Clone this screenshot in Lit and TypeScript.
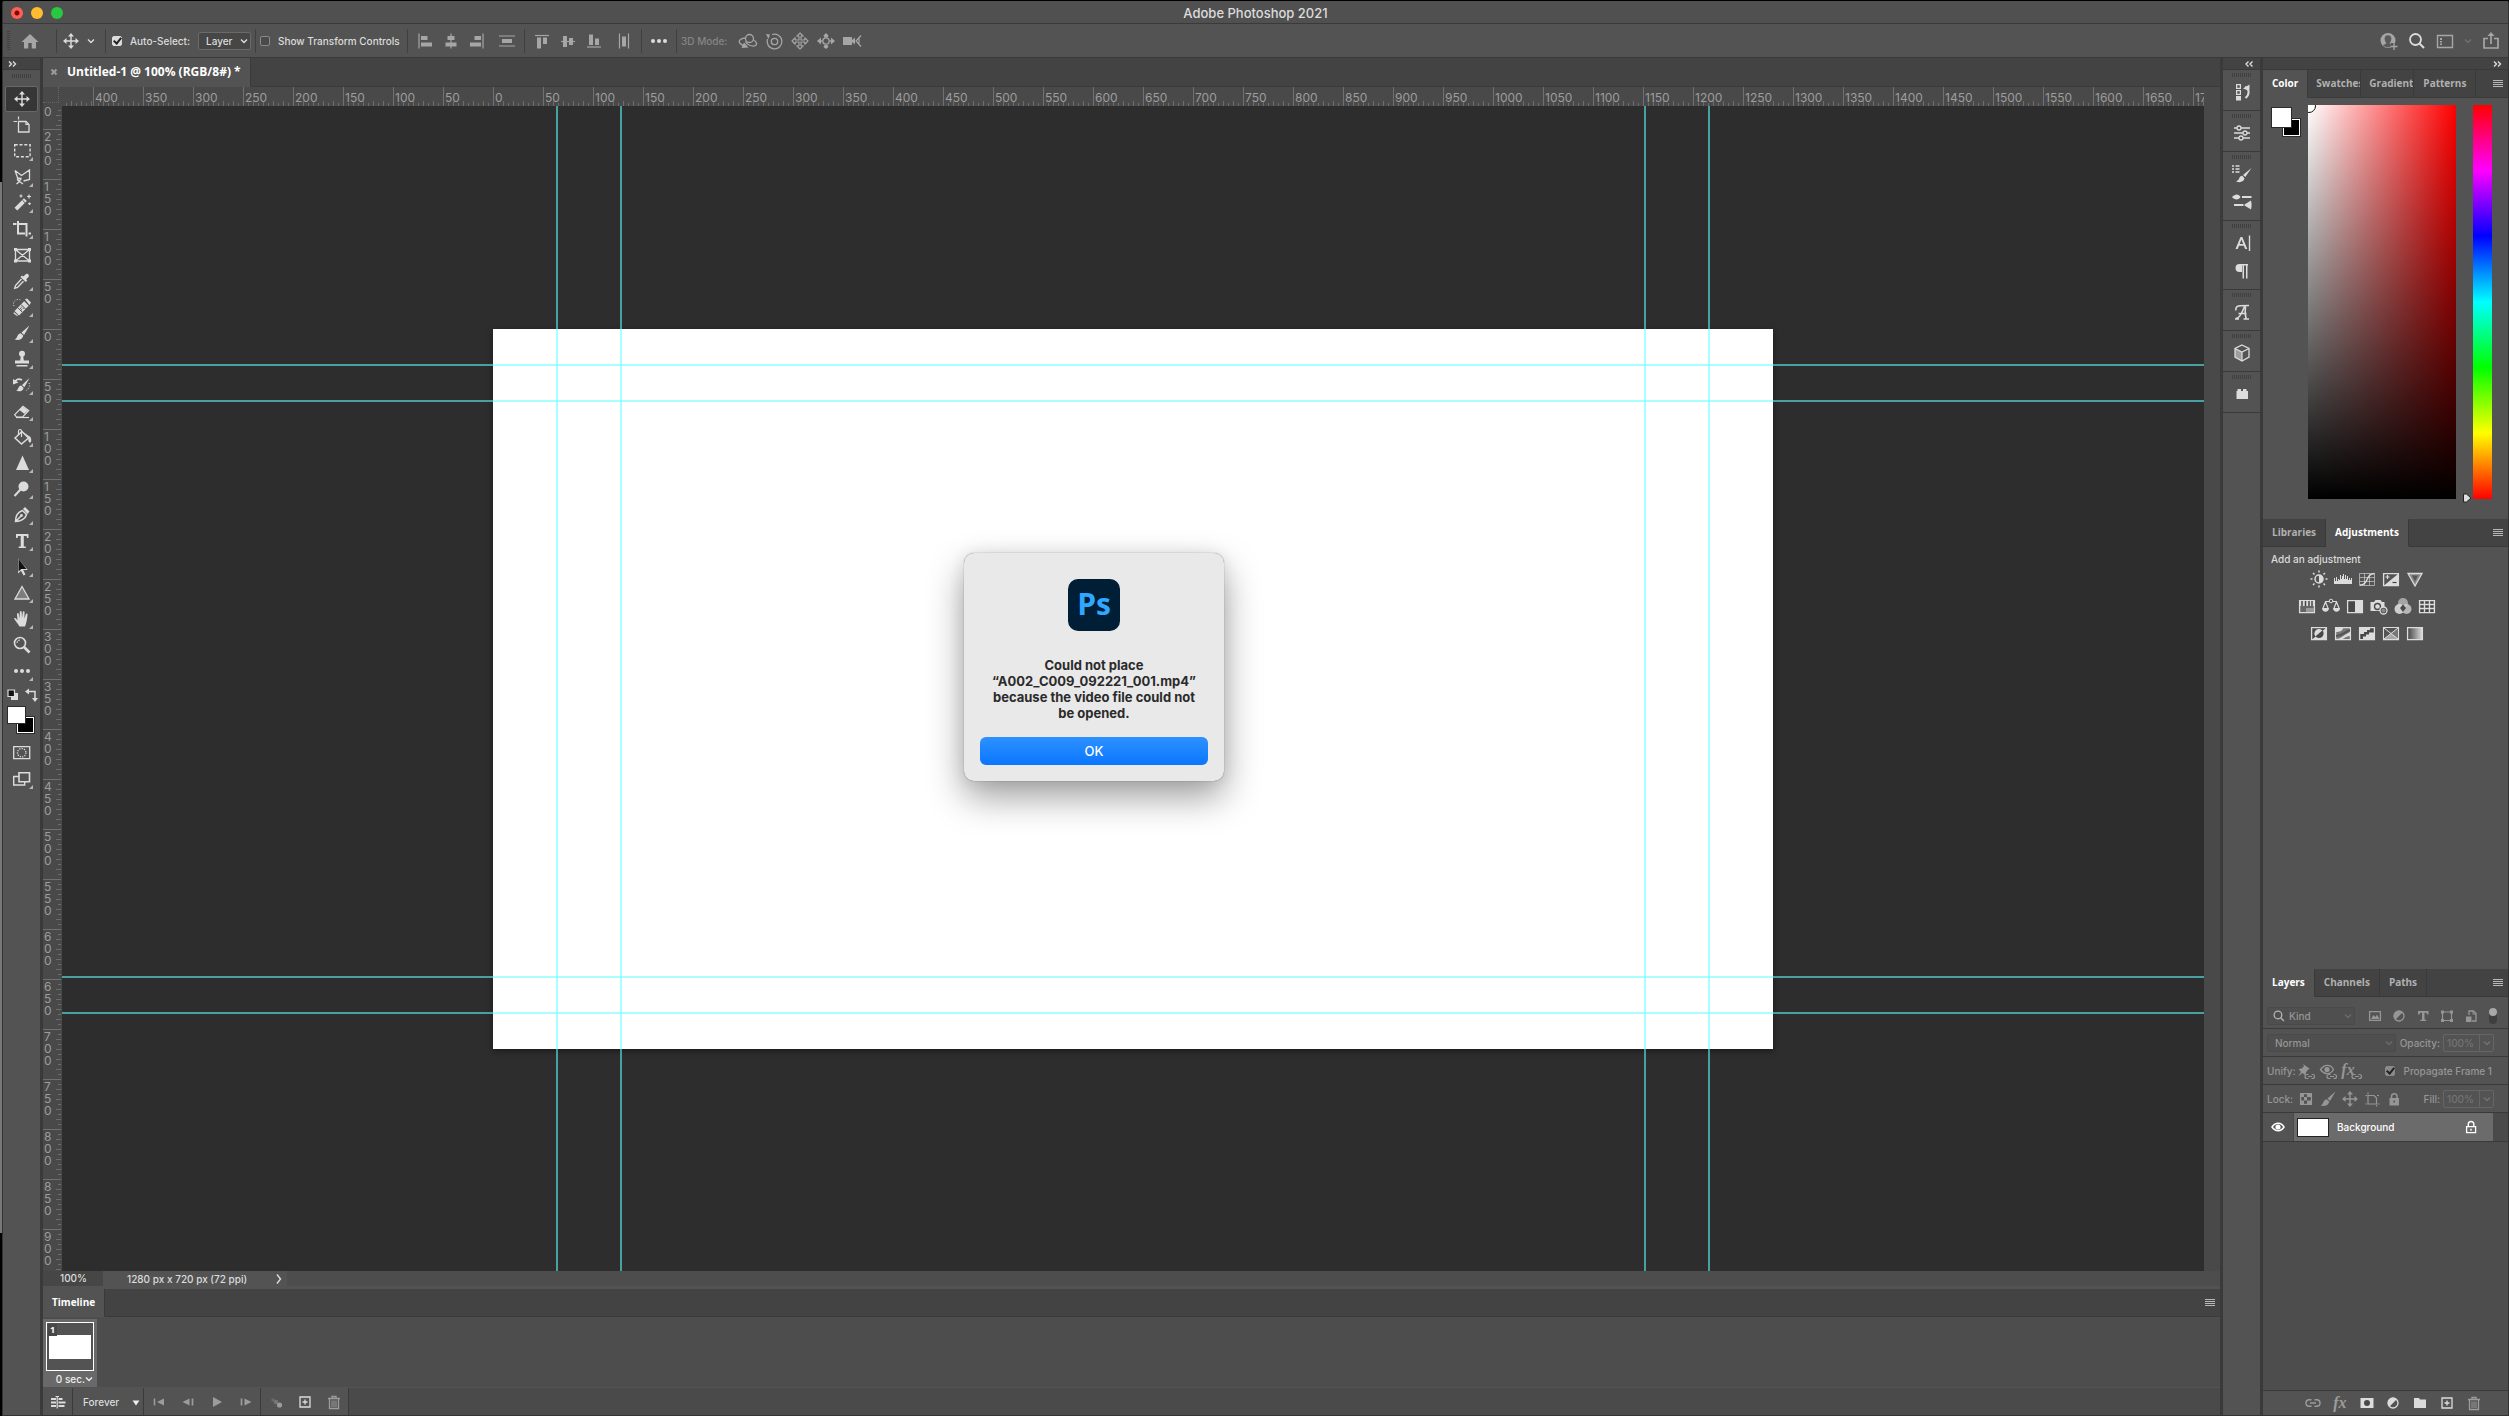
import { LitElement, html, svg, css, TemplateResult } from "lit";
import { customElement, state } from "lit/decorators.js";
import { classMap } from "lit/directives/class-map.js";

const brush = svg`<path d="M17.500 2.500 9.500 9.500 12 12Z M8.800 10.200 C6.500 10.400 5.800 12 5 14 4.600 15.200 3.500 16 2.500 16.300 6 18 10.500 16.500 11.300 12.700Z" fill="currentColor"/>`;
const moveCross = svg`<path d="M10 4v12M4 10h12" stroke="currentColor" stroke-width="1.400"/><path d="M10 2l3 3.500H7zM10 18l3-3.500H7zM2 10l3.500-3v6zM18 10l-3.500-3v6z" fill="currentColor"/>`;
const smallLink = svg`<path d="M12.500 13.500h-1.500a2 2 0 0 0 0 4h1.500M15.500 13.500h1a2 2 0 0 1 0 4h-1M12 15.500h4" stroke="currentColor" fill="none" stroke-width="1.200"/>`;
const trash = svg`<path d="M4 6.500h12M8 6V4.500h4V6" fill="none" stroke="currentColor" stroke-width="1.300"/><path d="M5.500 7v9.500h9V7" fill="none" stroke="currentColor" stroke-width="1.300"/><path d="M8 8.500v6.500M10 8.500v6.500M12 8.500v6.500" stroke="currentColor"/>`;

const ICONS: Record<string, TemplateResult> = {
  home: svg`<path d="M10 3 1.500 11H4v6.500h4.300V12h3.400v5.500H16V11h2.500z" fill="currentColor"/>`,
  move: moveCross,
  chevron: svg`<path d="M7 8.500l3 3 3-3" fill="none" stroke="currentColor" stroke-width="1.400"/>`,
  chevronRight: svg`<path d="M8 5.500l3.500 4.500L8 14.500" fill="none" stroke="currentColor" stroke-width="1.400"/>`,
  left: svg`<path d="M4 2.500v15" stroke="currentColor" stroke-width="1.200"/><path d="M6 5h6.500v4H6zM6 11.500h11v4H6z" fill="currentColor"/>`,
  hcenter: svg`<path d="M10 2.500v15" stroke="currentColor" stroke-width="1.200"/><path d="M6.500 5h7v4h-7zM4.500 11.500h11v4h-11z" fill="currentColor"/>`,
  right: svg`<path d="M16 2.500v15" stroke="currentColor" stroke-width="1.200"/><path d="M7.500 5H14v4H7.500zM3 11.500h11v4H3z" fill="currentColor"/>`,
  distv: svg`<path d="M2 5h16M2 15h16" stroke="currentColor" stroke-width="1.200"/><path d="M5 8h10v4H5z" fill="currentColor"/>`,
  top: svg`<path d="M3 4.500h14" stroke="currentColor" stroke-width="1.200"/><path d="M5 6.500h4v11H5zM11 6.500h4v6.500h-4z" fill="currentColor"/>`,
  vcenter: svg`<path d="M3 10.500h14" stroke="currentColor" stroke-width="1.200"/><path d="M5 5h4v11H5zM11 7h4v7h-4z" fill="currentColor"/>`,
  bottom: svg`<path d="M3 16h14" stroke="currentColor" stroke-width="1.200"/><path d="M5 3.500h4V14H5zM11 7.500h4V14h-4z" fill="currentColor"/>`,
  disth: svg`<path d="M5.500 2.500v15M14.500 2.500v15" stroke="currentColor" stroke-width="1.200"/><path d="M8 5.500h4v10H8z" fill="currentColor"/>`,
  dots: svg`<circle cx="4" cy="10" r="2" fill="currentColor"/><circle cx="10" cy="10" r="2" fill="currentColor"/><circle cx="16" cy="10" r="2" fill="currentColor"/>`,
  orbit: svg`<circle cx="11.500" cy="7.500" r="4" fill="none" stroke="currentColor" stroke-width="1.300"/><path d="M7.500 7C3 7 .5 9.500 1.500 11.500c.5 1.500 2.500 2.500 5 3.500M15.500 9c3 1.500 4 4 2 5.500-1.500 1-4 .5-6.500-.5-1.500-.7-3-2-3.500-3.500" fill="none" stroke="currentColor" stroke-width="1.300"/><path d="M6 11.500l4.500 5-7 .5z" fill="currentColor"/>`,
  roll: svg`<circle cx="10.500" cy="10.500" r="3.200" fill="none" stroke="currentColor" stroke-width="1.300"/><path d="M8 3.500a7.400 7.400 0 1 1-4.500 4.500" fill="none" stroke="currentColor" stroke-width="1.300"/><path d="M2 3l4 .5L4.500 8z" fill="currentColor"/>`,
  pan3d: svg`<path d="M10 2l3 3-2 .5V9h3.500l.5-2 3 3-3 3-.5-2H11v3.500l2 .5-3 3-3-3 2-.5V11H5.500L5 13l-3-3 3-3 .5 2H9V5.500L7 5z" fill="none" stroke="currentColor" stroke-width="1.200"/>`,
  slide3d: svg`<circle cx="10" cy="10" r="3.200" fill="none" stroke="currentColor" stroke-width="1.300"/><path d="M10 2l2.500 2.500-1 2h-3l-1-2zM10 18l2.500-2-1-2h-3l-1 2zM1 10l4-3.500V9l2 1-2 1v2.500zM19 10l-4-3.500V9l-2 1 2 1v2.500z" fill="currentColor"/>`,
  camera3d: svg`<path d="M1 6h9v3l3-2.500v7L10 11v3H1z" fill="currentColor"/><path d="M19 4.500L14 10l5 5.500M17 7.500v5" fill="none" stroke="currentColor" stroke-width="1.200"/>`,
  user: svg`<circle cx="9" cy="9.500" r="7.500" fill="currentColor"/><path d="M9 4.300c-2.600 0-3.800 2-3.300 4.400.3 1.500.9 2.300 1.400 3 .2 1-.8 1.300-3.100 2.600 3 2.700 7 2.700 10 0-2.300-1.300-3.300-1.600-3.100-2.600.5-.7 1.100-1.500 1.400-3C12.800 6.300 11.600 4.300 9 4.300z" fill="#5a5a5a"/><path d="M12 12h7v7h-7z" fill="#535353"/><path d="M11.500 15.500h7M15 12v7" stroke="currentColor" stroke-width="1.300"/>`,
  search: svg`<circle cx="8.500" cy="8.500" r="5.500" fill="none" stroke="currentColor" stroke-width="1.800"/><path d="M12.500 12.500l4.500 4.500" stroke="currentColor" stroke-width="2"/>`,
  workspace: svg`<path d="M2.500 4.500h15v12h-15z" fill="none" stroke="currentColor" stroke-width="1.400"/><path d="M5 7h2v2H5zM5 10h2v1.500H5zM5 12.500h2V14H5z" fill="currentColor"/>`,
  share: svg`<path d="M7 7.500H3v9.500h14V7.500h-4M10 13V3" fill="none" stroke="currentColor" stroke-width="1.700"/><path d="M10 1l3.500 4h-7z" fill="currentColor"/>`,
  artboard: svg`<path d="M6.500 6.500h7.500l3 3v7.500H6.500z" fill="none" stroke="currentColor" stroke-width="1.300"/><path d="M14 6.500v3h3M6.500 1.500v3M1.500 6.500h3.500" fill="none" stroke="currentColor" stroke-width="1.200"/>`,
  marquee: svg`<path d="M2.700 3.700h15.400v12H2.700z" fill="none" stroke="currentColor" stroke-width="1.400" stroke-dasharray="3 1.800"/>`,
  lasso: svg`<path d="M3 3.500l6.500 5L17.500 3v9.500l-6 1.500M3 3.500L6 12l3.500-1M9 12c-1-1.500-4-1-3.500.7.5 1.500 3.500.8 3.500-.7zM7.500 14.500l-3 2.500M6 13.500l5 3.500" fill="none" stroke="currentColor" stroke-width="1.300"/>`,
  wand: svg`<path d="M2.500 14.700L12 5.200l2.800 2.800L5.300 17.500z" fill="currentColor"/><path d="M10.300 7l2.700 2.700" stroke="#535353"/><path d="M9 1.500v3M7.500 3h3M17 1.500v4M15 3.500h4M17.500 9.500v2.500M16.200 10.700h2.600" stroke="currentColor" stroke-width="1.200"/>`,
  crop: svg`<path d="M1 5h3.500M6 2v12.500h7" fill="none" stroke="currentColor" stroke-width="2"/><path d="M6 5h8.500v12.500M16.500 14.500h2.500" fill="none" stroke="currentColor" stroke-width="2"/>`,
  frame: svg`<path d="M3.500 4.500h14v11.500h-14zM3.500 4.500l14 11.500M17.500 4.500l-14 11.500" fill="none" stroke="currentColor" stroke-width="1.300"/><path d="M2 3h3v3H2zM16 3h3v3h-3zM2 14.500h3v3H2zM16 14.500h3v3h-3z" fill="currentColor"/>`,
  eyedropper: svg`<path d="M13.500 3.500c1.500-2 4.500.5 3 2.500l-2.300 2.300 1 1.200-1.500 1.500L8.500 6 10 4.500l1.300 1z" fill="currentColor"/><path d="M9.500 8l-6 6.500-.8 2.800 2.800-.8 6-6.300" fill="none" stroke="currentColor" stroke-width="1.400"/>`,
  heal: svg`<path d="M2.500 14l9.700-9.700 4.500 4.500L7 18.500z" fill="currentColor"/><path d="M13 2.500l2-1 4 4-1.500 2.500zM2 15l-.5 1.500 3.500 2.500 1-.5z" fill="currentColor"/><path d="M5.800 10.700l4.500 4.500M9 7.500l4.500 4.500" stroke="#535353"/><path d="M9.500 9.700v.8M8.300 11.300h.8M10.800 11.300h.8M9.500 12.300v1" stroke="#535353" stroke-width="1.300"/><path d="M2 9c-1.500-3 .5-6.500 4-6.500 2 0 3 .8 3.500 1.500" stroke="currentColor" fill="none" stroke-dasharray="1 1.600"/>`,
  brush,
  stamp: svg`<circle cx="10" cy="4.800" r="3" fill="currentColor"/><path d="M8.800 7h2.400l.6 4.500H17v3H3v-3h5.200zM4.500 16h11v1.500h-11z" fill="currentColor"/>`,
  historyBrush: svg`<path d="M17.500 3L10 10l2.300 2.300zM9.300 10.600c-2 .2-2.600 1.600-3.200 3-.4 1-1 1.600-2 2 3 1.600 7 .5 7.500-2.700z" fill="currentColor"/><path d="M3 6.500c1.500-2.500 4-3 7-1.500" stroke="currentColor" stroke-width="1.500" fill="none"/><path d="M1 9.500V4l5.500 3.500z" fill="currentColor"/><path d="M17 8c1.500 3-.5 7-4 8" stroke="currentColor" fill="none" stroke-dasharray="1 1.500"/>`,
  eraser: svg`<path d="M2.500 13.500L10.500 5.500l5.500 4-5.500 5H4z" fill="currentColor"/><path d="M7.500 9l5 4-2 2H4l-1.200-1.500z" fill="#535353"/><path d="M2.700 13.700L11 5.200l5.700 4.300-6 6.500H4.500z" fill="none" stroke="currentColor" stroke-width="1.200"/><path d="M4 16.500h13" stroke="currentColor" stroke-width="1.200"/>`,
  bucket: svg`<path d="M3 11l7-6.500 6.500 6.500-7 6z" fill="none" stroke="currentColor" stroke-width="1.500"/><path d="M6.500 8V4c0-2 3-2 3 0v6" fill="none" stroke="currentColor" stroke-width="1.200"/><path d="M11 5l7.500 5c1 2 1 5 0 5.500-2 .5-2.500-2.500-2-5z" fill="currentColor"/>`,
  sharpen: svg`<path d="M10.500 2.500l6.500 14.500H4z" fill="currentColor"/>`,
  dodge: svg`<circle cx="11.500" cy="7.500" r="5" fill="currentColor"/><path d="M8.500 10.500L2.500 17" stroke="currentColor" stroke-width="2"/>`,
  pen: svg`<path d="M3.500 16.500C3.500 11.500 6 7 10.500 5.500L14.500 9.500C13.500 14 8.500 16.500 3.500 16.500zM3.500 16.500l5.500-5.500" fill="none" stroke="currentColor" stroke-width="1.500"/><circle cx="9.500" cy="10.500" r="1.400" fill="currentColor"/><path d="M11 4l2-2 4.500 4.500-2 2.500z" fill="currentColor"/>`,
  type: svg`<path d="M4 3h12.500v4H15l-.5-2h-2.700v10.500h2V17H6.700v-1.500h2V5H6l-.5 2H4z" fill="currentColor"/>`,
  arrow: svg`<path d="M6 1.500v15l3-2.800 2.500 4.800 2-1-2.300-4.500h4.500z" fill="currentColor"/><path d="M6.500 2v12.500l2.700-2.600h5.200z" fill="#111"/>`,
  triangle: svg`<path d="M10 3.500l7 12.500H3z" fill="#7d7d7d" stroke="currentColor" stroke-width="1.300"/>`,
  hand: svg`<path d="M2 9.500c1-1 2-.3 3.500 2L5 5c.3-1.200 1.500-1.200 1.800 0l.7 4.500L7.800 3c.3-1.200 1.700-1.200 1.900 0l.3 6 .8-6c.3-1.200 1.700-1 1.800.2L12.300 9.500l1.500-4.300c.5-1.100 1.800-.7 1.700.5-.3 4-1 8-2.500 11.800H7.500C6 15 3.500 12 2 9.500z" fill="currentColor"/>`,
  zoom: svg`<circle cx="8" cy="8" r="5.500" fill="none" stroke="currentColor" stroke-width="1.600"/><path d="M12 12l5.500 5.500" stroke="currentColor" stroke-width="2.600"/><path d="M5 8c0-2 1.300-3 3-3" fill="none" stroke="currentColor"/>`,
  defaults: svg`<path d="M8 8h7v7H8z" fill="currentColor"/><path d="M5 5h6.500v6.500H5z" fill="#111" stroke="currentColor" stroke-width="1.200"/>`,
  swap: svg`<path d="M6 6.500h8v8" fill="none" stroke="currentColor" stroke-width="1.500"/><path d="M4 6.500l4-3v6zM14 17l3-4h-6z" fill="currentColor"/>`,
  quickmask: svg`<path d="M1.700 3.700h16v12h-16z" fill="none" stroke="currentColor" stroke-width="1.300"/><circle cx="9.700" cy="9.700" r="4.200" fill="none" stroke="currentColor" stroke-width="1.300" stroke-dasharray="1.200 1.200"/>`,
  screen: svg`<path d="M7 7.500H1.700v8.500h11v-3" fill="none" stroke="currentColor" stroke-width="1.400"/><path d="M7 3.700h10.500v9H7z" fill="none" stroke="currentColor" stroke-width="1.600"/>`,
  history: svg`<path d="M4.600 2.600h3.800v3.800H4.600zM4.600 8.600h3.800v3.800H4.600z" fill="none" stroke="currentColor" stroke-width="1.200"/><path d="M4 14h5v4.500H4zM11 6.500l6.500-4v5l-3 .3z" fill="currentColor"/><path d="M13 5c4.500 2 5 7 .5 11" stroke="currentColor" fill="none" stroke-width="2"/>`,
  sliders: svg`<path d="M2 5h3M9 5h9M2 10h9M15 10h3M2 15h5M11 15h7" stroke="currentColor" stroke-width="1.300"/><circle cx="7" cy="5" r="2" fill="none" stroke="currentColor" stroke-width="1.300"/><circle cx="13" cy="10" r="2" fill="none" stroke="currentColor" stroke-width="1.300"/><circle cx="9" cy="15" r="2" fill="none" stroke="currentColor" stroke-width="1.300"/>`,
  brushSettings: svg`<path d="M19.500 4L11 11l2.300 2zM10.300 11.800c-2 0-2.800 1.500-3.300 3-.4 1.200-1.400 2-3 2.500 3.500 1.800 8 .7 8.500-3z" fill="currentColor"/><path d="M0 2h2M0 5h2M0 8h2M3.500 2h4M3.500 5h4M3.500 8h4" stroke="currentColor" stroke-width="1.500"/>`,
  brushes: svg`<path d="M0 5c3-3.500 7-3.500 8.500 0C7 8.500 2 8 0 5zM10 4h9.500v2H10zM2 12h9.500v2H2zM12.500 12.500L19 8.500c.8 3 .8 6 0 9l-6.500-4z" fill="currentColor"/>`,
  character: svg`<path d="M3.500 16L8.500 4h1.800l5 12h-2.200l-1.300-3.300H7L5.700 16zM7.700 11h3.500L9.400 6.400z" fill="currentColor"/><path d="M17.500 2.500v15.500" stroke="currentColor" stroke-width="1.400"/>`,
  paragraph: svg`<path d="M10 3H7.500a4 4 0 0 0 0 8H10zM10 3h6v1.500h-6zM10.500 3H12v14.500h-1.500zM14 3h1.500v14.500H14z" fill="currentColor"/>`,
  glyphs: svg`<path d="M3.500 16.500c3 .5 6-4 9-12M13.500 3.500c-.5 4-.5 9 .5 13M4 8.500C3 5 6 3.500 9 3.700L17 3.500M6.500 11.500h8M11.500 17h5.500M3 17h4" fill="none" stroke="currentColor" stroke-width="1.600"/>`,
  cube: svg`<path d="M10 2l7 3.500v8.500l-7 4-7-4V5.500z" fill="none" stroke="currentColor" stroke-width="1.300"/><path d="M3 5.500L10 9v9l-7-4z" fill="currentColor" opacity=".55"/><path d="M3 5.500L10 9l7-3.500M10 9v9" fill="none" stroke="currentColor" stroke-width="1.200"/>`,
  plugin: svg`<path d="M5.500 7V5h3.500v2h2V5h3.500v2H16v8H4.500V7z" fill="currentColor"/>`,
  menu: svg`<path d="M5 6.500h10M5 8.500h10M5 10.500h10M5 12.500h10" stroke="currentColor"/>`,
  brightness: svg`<circle cx="10" cy="10" r="4" fill="none" stroke="currentColor" stroke-width="1.500"/><path d="M10 6a4 4 0 0 1 0 8z" fill="currentColor"/><path d="M10 1.500v2M10 16.500v2M1.500 10h2M16.500 10h2M4 4l1.500 1.500M14.500 14.500L16 16M4 16l1.500-1.500M14.500 5.500L16 4" stroke="currentColor" stroke-width="1.500"/>`,
  levels: svg`<path d="M1 15V9h1v3h1V8h1v4h1v-2h1v1h1V6h1v4h1V7h1V5h1v5h1V6h1v4h1V7h1v4h1V9h1v2h1V9h1v6z" fill="currentColor"/>`,
  curves: svg`<path d="M2.500 4.500h15v12h-15zM7.500 4.500v12M12.500 4.500v12M2.500 8.500h15M2.500 12.500h15" fill="none" stroke="currentColor" opacity=".6"/><path d="M3 16c9 0 5-11 14.500-11.500" fill="none" stroke="currentColor" stroke-width="1.400"/>`,
  exposure: svg`<path d="M2.600 4.600h14.800v12H2.600z" fill="none" stroke="currentColor" stroke-width="1.300"/><path d="M17 5v11.500H3z" fill="currentColor"/><path d="M4.500 8h4M6.500 6v4" stroke="currentColor" stroke-width="1.200"/><path d="M11.500 13.500h4" stroke="#444" stroke-width="1.200"/>`,
  vibrance: svg`<path d="M3 4.500h14L10 17z" fill="#888" stroke="currentColor" stroke-width="1.300"/><path d="M7 6.500h6l-3 6z" fill="#555"/>`,
  hue: svg`<path d="M2.600 4.600h14.800v12H2.600z" fill="#666" stroke="currentColor" stroke-width="1.300"/><path d="M3 4.500h14v5.500H3z" fill="currentColor"/><path d="M5 5v5M8.500 5v5M12 5v5M15 5v5" stroke="#444" stroke-width="1.500"/><path d="M9 12h8v4H9z" fill="#999"/>`,
  balance: svg`<path d="M4 5.500h12M10 4v2.500M4.500 6L2 12M4.500 6L7 12M15.500 6L13 12M15.500 6l2.500 6" fill="none" stroke="currentColor" stroke-width="1.200"/><path d="M1 12h7c0 5-7 5-7 0zM12 12h7c0 5-7 5-7 0z" fill="currentColor"/><circle cx="10" cy="5" r="1.800" fill="#535353" stroke="currentColor"/>`,
  bw: svg`<path d="M2.600 4.600h14.800v12H2.600z" fill="#484848" stroke="currentColor" stroke-width="1.300"/><path d="M10 4.500h7.500v12H10z" fill="currentColor"/>`,
  photo: svg`<path d="M1.500 6h3.500l1.500-2h5L13 6h2.500v9h-14z" fill="currentColor"/><circle cx="8.500" cy="10.500" r="3" fill="none" stroke="#484848" stroke-width="1.400"/><circle cx="14.500" cy="14.500" r="3.500" fill="#535353" stroke="currentColor" stroke-width="1.300"/><circle cx="14.500" cy="14.500" r="2" fill="#888"/>`,
  mixer: svg`<circle cx="10" cy="7" r="5" fill="#a5a5a5"/><circle cx="6.500" cy="13" r="5" fill="#dcdcdc" opacity=".9"/><circle cx="13.500" cy="13" r="5" fill="#cfcfcf" opacity=".8"/><path d="M10 8.500l3 3.500-3 4-3-4z" fill="#4a4a4a"/>`,
  lookup: svg`<path d="M2.600 4.600h14.800v12H2.600zM7.500 4.500v12M12.500 4.500v12M2.600 8.500h15M2.600 12.500h15" fill="#444" stroke="currentColor" stroke-width="1.400"/>`,
  invert: svg`<path d="M2.600 4.600h14.800v12H2.600z" fill="#484848" stroke="currentColor" stroke-width="1.300"/><path d="M17 5v11.500H3z" fill="currentColor"/><path d="M6.500 13.500a4.500 4.500 0 0 1 7-6z" fill="currentColor"/><path d="M13.500 7.500a4.500 4.500 0 0 1-7 6z" fill="#484848"/>`,
  posterize: svg`<path d="M2.600 4.600h14.800v12H2.600z" fill="#777" stroke="currentColor" stroke-width="1.300"/><path d="M3 5h7c0 3-4 4-7 4zM3 16c5 0 6-3 14-7v4c-4 0-6 3-9 3.500z" fill="currentColor"/><path d="M3 13c6 0 8-4 14-6" stroke="#555" stroke-width="2" fill="none"/>`,
  threshold: svg`<path d="M2.600 4.600h14.800v12H2.600z" fill="#484848" stroke="currentColor" stroke-width="1.300"/><path d="M3 5h10v2h-3v2H7v2H3zM17 16H6v-2.500h3v-2h3v-2h5z" fill="currentColor"/>`,
  selective: svg`<path d="M2.600 4.600h14.800v12H2.600z" fill="#a8a8a8" stroke="currentColor" stroke-width="1.300"/><path d="M3 5l7 5.500L3 16z" fill="#555"/><path d="M17 5l-7 5.500 7 5.500z" fill="#777"/><path d="M3 5l7 5.500L17 5z" fill="#555"/><path d="M3 5l7 5.500L17 5M3 16l7-5.500 7 5.500" stroke="currentColor" fill="none"/>`,
  gradientMap: svg`<defs><linearGradient id="gm"><stop offset="0" stop-color="#444"/><stop offset="1" stop-color="#ddd"/></linearGradient></defs><path d="M2.600 4.600h14.800v12H2.600z" fill="url(#gm)" stroke="currentColor" stroke-width="1.300"/>`,
  pixels: svg`<path d="M4.600 5.600h10.800v8.800H4.600z" fill="none" stroke="currentColor" stroke-width="1.300"/><path d="M6 13l2.500-4 2 2 1.500-2.500L14.500 13z" fill="currentColor"/>`,
  adjust: svg`<circle cx="10" cy="10" r="5" fill="none" stroke="currentColor" stroke-width="1.300"/><path d="M13.800 6.200a5.300 5.300 0 0 0-7.500 7.500z" fill="currentColor"/>`,
  typeSmall: svg`<path d="M5 5h10.500v3.500H14l-.5-1.700h-2v7h1.700V15H7.300v-1.200H9v-7H7l-.5 1.700H5z" fill="currentColor"/>`,
  shape: svg`<path d="M5.500 6h9v8.500h-9z" fill="none" stroke="currentColor" stroke-width="1.200"/><path d="M4 4.500h3v3H4zM13 4.500h3v3h-3zM4 13h3v3H4zM13 13h3v3h-3z" fill="currentColor"/>`,
  smart: svg`<path d="M8 9V5h4.500L15 7.500V15H11" fill="none" stroke="currentColor" stroke-width="1.300"/><path d="M12 5v3h3" fill="none" stroke="currentColor"/><path d="M5 10.500h5.500V16H5z" fill="currentColor"/>`,
  pinLink: svg`<path d="M7 3l7 5-2 .5-2 3-.5 3L6.500 12 2 15.500 5 11 2.500 8 6 7.500l2-2.500z" fill="currentColor"/>${smallLink}`,
  eyeLink: svg`<path d="M2.500 8.500c4-5.500 10-5.500 13 0-3 5.500-9 5.500-13 0z" fill="none" stroke="currentColor" stroke-width="1.400"/><circle cx="9" cy="8.500" r="2.600" fill="currentColor"/>${smallLink}`,
  checker: svg`<path d="M4.600 4.600h10.800v10.800H4.600z" fill="none" stroke="currentColor" stroke-width="1.300"/><path d="M5 5h3v3H5zM11 5h4v3h-4zM8 8h3v3.500H8zM5 11.500h3V15H5zM11 11.500h4V15h-4z" fill="currentColor"/>`,
  artboardLock: svg`<path d="M6 6.500h6l2.500 2.500v6H6zM6 3.500v2M3.500 6.500h1.500M14.500 16v1.500M15.500 15h2M3.500 15h1.500M15 6.500h2" fill="none" stroke="currentColor" stroke-width="1.200"/>`,
  lock: svg`<path d="M5.500 9h9.500v7.500H5.500z" fill="currentColor"/><path d="M7.500 9V7.500a2.700 2.700 0 0 1 5.500 0V9" fill="none" stroke="currentColor" stroke-width="1.500"/><path d="M10.200 11.500v2" stroke="#535353" stroke-width="1.500"/>`,
  lockOpen: svg`<path d="M5.600 9.600h9v6h-9z" fill="none" stroke="currentColor" stroke-width="1.300"/><path d="M7.300 9V6.700a2.800 2.800 0 0 1 5.500 0V9" fill="none" stroke="currentColor" stroke-width="1.400"/><path d="M10 11.700v2" stroke="currentColor" stroke-width="1.400"/>`,
  eye: svg`<path d="M4 10c3.500-5 9-5 12 0-3 5-8.500 5-12 0z" fill="none" stroke="currentColor" stroke-width="1.500"/><circle cx="10" cy="10" r="2.600" fill="currentColor"/>`,
  link: svg`<path d="M8.500 6.800H6.200a3.200 3.200 0 0 0 0 6.400h2.300M11.500 6.800h2.300a3.200 3.200 0 0 1 0 6.400h-2.300M7 10h6" fill="none" stroke="currentColor" stroke-width="1.400"/>`,
  mask: svg`<path d="M3.500 5h13v10h-13z" fill="currentColor"/><circle cx="10" cy="10" r="3" fill="#484848"/>`,
  folder: svg`<path d="M4 5h5l1 1.500h6V15H4z" fill="currentColor"/>`,
  plus: svg`<path d="M5 5h10v10H5z" fill="none" stroke="currentColor" stroke-width="1.300"/><path d="M7.500 10h5M10 7.500v5" stroke="currentColor" stroke-width="1.300"/>`,
  trash,
  timelineMode: svg`<path d="M3 7h5M3 10.500h5M3 14h5M10.500 7h4M10.500 10.500h7M10.500 14h6" stroke="currentColor" stroke-width="1.800"/><path d="M9.200 5v11.500M7.500 4.500h3.500" stroke="currentColor" stroke-width="1.200"/>`,
  first: svg`<path d="M5.500 6.500v7" stroke="currentColor" stroke-width="1.500"/><path d="M15 6.500v7L8 10z" fill="currentColor"/>`,
  prev: svg`<path d="M11.500 6.500v7L4.500 10z" fill="currentColor"/><path d="M14.500 6.500v7" stroke="currentColor" stroke-width="1.700"/>`,
  play: svg`<path d="M6 5l9 5-9 5z" fill="currentColor"/>`,
  next: svg`<path d="M5.500 6.500v7" stroke="currentColor" stroke-width="1.700"/><path d="M8.500 6.500v7l7-3.500z" fill="currentColor"/>`,
  tween: svg`<circle cx="13.500" cy="13" r="2.600" fill="currentColor"/><circle cx="10" cy="10" r="2.200" fill="currentColor" opacity=".5"/><circle cx="7" cy="8" r="1.800" fill="currentColor" opacity=".3"/>`,
  caret: svg`<path d="M6.500 8.500h7l-3.500 5z" fill="currentColor"/>`,
  close: svg`<path d="M7.500 7.500l5 5M12.500 7.500l-5 5" stroke="currentColor" stroke-width="2"/>`,
  expand: svg`<path d="M6 7.500l2.500 2.500L6 12.500M10 7.500l2.500 2.500L10 12.500" fill="none" stroke="currentColor" stroke-width="1.400"/>`,
  collapse: svg`<path d="M8.500 7.500L6 10l2.500 2.500M12.500 7.500L10 10l2.500 2.500" fill="none" stroke="currentColor" stroke-width="1.400"/>`,
};

const icon = (name: string) =>
  html`<svg class="icon" viewBox="0 0 20 20" width="20" height="20" aria-hidden="true">${ICONS[name]}</svg>`;

const iconButton = (name: string, label: string, cls = "") =>
  html`<button class="ib ${cls}" type="button" aria-label=${label}>${icon(name)}</button>`;

const TOOLS: [string, string, boolean][] = [
  ["move", "Move", false], ["artboard", "Artboard", false], ["marquee", "Rectangular Marquee", true],
  ["lasso", "Polygonal Lasso", true], ["wand", "Magic Wand", true], ["crop", "Crop", true],
  ["frame", "Frame", false], ["eyedropper", "Eyedropper", true], ["heal", "Healing Brush", true],
  ["brush", "Brush", true], ["stamp", "Clone Stamp", true], ["historyBrush", "History Brush", true],
  ["eraser", "Eraser", true], ["bucket", "Paint Bucket", true], ["sharpen", "Sharpen", true],
  ["dodge", "Dodge", true], ["pen", "Pen", true], ["type", "Type", true],
  ["arrow", "Path Selection", true], ["triangle", "Triangle", true], ["hand", "Hand", true],
  ["zoom", "Zoom", false], ["dots", "Edit Toolbar", true],
];

const DOCK: [string, string][][] = [
  [["history", "History"]],
  [["sliders", "Properties"]],
  [["brushSettings", "Brush Settings"], ["brushes", "Brushes"]],
  [["character", "Character"], ["paragraph", "Paragraph"]],
  [["glyphs", "Glyphs"]],
  [["cube", "3D"]],
  [["plugin", "Plugins"]],
];

const ADJUSTMENTS: [string, string][][] = [
  [["brightness", "Brightness/Contrast"], ["levels", "Levels"], ["curves", "Curves"], ["exposure", "Exposure"], ["vibrance", "Vibrance"]],
  [["hue", "Hue/Saturation"], ["balance", "Color Balance"], ["bw", "Black & White"], ["photo", "Photo Filter"], ["mixer", "Channel Mixer"], ["lookup", "Color Lookup"]],
  [["invert", "Invert"], ["posterize", "Posterize"], ["threshold", "Threshold"], ["selective", "Selective Color"], ["gradientMap", "Gradient Map"]],
];

const marks = (from: number, to: number) => {
  const out: number[] = [];
  for (let v = from; v <= to; v += 50) out.push(Math.abs(v));
  return out;
};
const H_MARKS = marks(-400, 1700);
const V_MARKS = marks(-200, 900);

@customElement("app-root")
export class AppRoot extends LitElement {
  @state() private tool = "move";

  static styles = css`
    :host {
      display: block;
      --line: #3a3a3a;
      --panel: #535353;
      --dark: #434343;
      --body: #4d4d4d;
      --fg: #dcdcdc;
      --dim: #9c9c9c;
      --tab: "Open Sans", "Noto Sans", sans-serif;
      font: 500 10px/14px Inter, "Liberation Sans", sans-serif;
      color: var(--fg);
      background: linear-gradient(#000 182px, #777 182px, #777 1233px, #000 1233px);
    }
    * { box-sizing: border-box; }
    button, input, select { font: inherit; color: inherit; margin: 0; padding: 0; border: 0; background: none; }
    .window {
      display: flex;
      flex-direction: column;
      min-height: 100vh;
      margin-left: 2px;
      border: 1px solid #333;
      border-top: 1px solid #000;
      background: var(--line);
      border-radius: 4px 4px 0 0;
    }
    .icon { display: block; flex: none; }
    .ib { display: flex; align-items: center; justify-content: center; width: 26px; height: 26px; flex: none; }
    .slim { width: 20px; }
    .dim { color: var(--dim); }
    .spacer { flex: 1; }

    .titlebar { display: flex; align-items: center; height: 22px; background: #505050; padding: 1px 8px 0; }
    .lights { display: flex; gap: 8px; width: 80px; }
    .light { width: 12px; height: 12px; border-radius: 50%; }
    .red { background: radial-gradient(circle, #7c0a02 2px, #ff5f57 3px); }
    .yellow { background: #febc2e; }
    .green { background: #28c840; }
    .title { flex: 1; text-align: center; font: 500 13px/16px Inter, sans-serif; margin: 0; padding: 1px 80px 0 0; }

    .options { display: flex; align-items: center; height: 33px; margin: 1px 0; background: var(--panel); padding: 0 4px; font-size: 10px; }
    .grip { width: 20px; height: 4px; background: repeating-linear-gradient(90deg, #404040 0 1px, transparent 1px 2px); }
    .grip-v { width: 3px; height: 20px; margin-right: 8px; background: repeating-linear-gradient(#404040 0 1px, transparent 1px 2px); }
    .sep { width: 1px; height: 24px; margin: 0 4px; background: #3f3f3f; flex: none; }
    .home { width: 34px; padding-right: 10px; color: #a6a6a6; }
    .check { display: flex; align-items: center; gap: 8px; white-space: nowrap; }
    .check input {
      appearance: none; display: flex; align-items: center; justify-content: center;
      width: 10px; height: 10px; border: 1px solid #8a8a8a; border-radius: 2px; background: #4a4a4a;
    }
    .check input:checked { background: var(--fg); border-color: var(--fg); }
    .check input:checked::after { content: ""; width: 3px; height: 6px; margin-bottom: 2px; border: solid #222; border-width: 0 2px 2px 0; transform: rotate(40deg); }
    .auto { width: 86px; margin-left: 2px; }
    .transform { width: 143px; }
    .drop { display: grid; align-items: center; }
    .drop > * { grid-area: 1 / 1; }
    .drop select { appearance: none; width: 100%; height: 18px; padding-left: 7px; border: 1px solid #6a6a6a; border-radius: 2px; background: #464646; }
    .drop .icon { justify-self: end; pointer-events: none; margin-right: -3px; }
    .drop.layer { width: 53px; }
    .align { display: flex; color: #a6a6a6; }
    .wide { margin-left: 4px; }
    .mode { width: 54px; color: #858585; }
    .right-tools { display: flex; align-items: center; gap: 2px; color: #a6a6a6; }
    .right-tools .slim { width: 16px; }

    .work { display: grid; grid-template-columns: 37px minmax(0, 1fr) 37px 245px; column-gap: 3px; flex: 1; background: var(--line); }
    .col { display: flex; flex-direction: column; background: var(--panel); min-width: 0; }
    .head { display: flex; align-items: center; height: 12px; background: var(--dark); border-bottom: 1px solid var(--line); flex: none; overflow: hidden; }
    .head.end { justify-content: flex-end; }

    .toolgrip { display: flex; justify-content: center; align-items: center; height: 16px; padding-bottom: 5px; }
    .tool { position: relative; display: flex; align-items: center; justify-content: center; width: 33px; height: 26px; margin: 0 2px; border: 1px solid transparent; }
    .tool.active { background: #363636; border-color: #686868; border-radius: 2px; }
    .more::after { content: ""; position: absolute; right: 4px; bottom: 2px; border: 2px solid; border-color: transparent #b8b8b8 #b8b8b8 transparent; }
    .pair { display: flex; justify-content: space-between; height: 22px; padding: 1px 1px 0; }
    .pair .ib { width: 18px; height: 20px; }
    .swatches { display: grid; grid-template-columns: 9px 10px 9px; grid-template-rows: 10px 8px 10px; margin: 0 0 6px 4px; }
    .swatches button { border: 1px solid #2b2b2b; padding: 0; }
    .fg { grid-area: 1 / 1 / 3 / 3; background: #fff; z-index: 1; }
    .bg { grid-area: 2 / 2 / 4 / 4; background: #000; box-shadow: inset 0 0 0 1px #fff; }

    .tabs { display: flex; height: 28px; background: var(--dark); flex: none; font: 700 10px/14px var(--tab); }
    .tab { display: flex; align-items: center; padding: 0 9px 1px; color: #b0b0b0; border-right: 1px solid var(--line); border-bottom: 1px solid var(--line); white-space: nowrap; overflow: hidden; }
    .tab.on { background: var(--panel); color: #fff; border-bottom-color: var(--panel); }
    .tab.clip { width: 53px; padding: 0 0 1px 8px; }
    .tabs .rest { display: flex; flex: 1; align-items: center; justify-content: flex-end; border-bottom: 1px solid var(--line); color: #b8b8b8; }
    .doctabs { height: 29px; font-size: 12px; }
    .doctab { padding: 0 9px 0 1px; gap: 3px; }

    .rulers { display: grid; grid-template-columns: 19px minmax(0, 1fr) 16px; grid-template-rows: 19px minmax(0, 1fr); flex: 1; background: #494949; color: #9d9d9d; font: 400 12px/14px Inter, sans-serif; }
    .corner { border-right: 1px dotted #666; border-bottom: 1px dotted #666; margin: 0 3px 3px 0; }
    .hr { display: flex; overflow: hidden; }
    .hm {
      flex: none; width: 50px; padding: 4px 0 0 1px; border-left: 1px solid #707070; line-height: 14px;
      background:
        repeating-linear-gradient(90deg, transparent 0 9px, #6c6c6c 9px 10px) 0 100% / 100% 5px no-repeat,
        repeating-linear-gradient(90deg, transparent 0 4px, #6c6c6c 4px 5px) 0 100% / 100% 3px no-repeat;
    }
    .hm.lead { width: 31px; border: 0; }
    .vr { overflow: hidden; height: 0; min-height: 100%; }
    .vm {
      display: flex; flex-direction: column; height: 50px; padding: 1px 0 0 1px; border-top: 1px solid #707070; line-height: 12px; margin-right: 1px;
      background:
        repeating-linear-gradient(transparent 0 9px, #6c6c6c 9px 10px) 100% 0 / 5px 100% no-repeat,
        repeating-linear-gradient(transparent 0 4px, #6c6c6c 4px 5px) 100% 0 / 3px 100% no-repeat;
    }
    .vm.lead { height: 23px; border: 0; padding-top: 0; }
    .stage { position: relative; display: grid; place-content: center; overflow: hidden; background: #2d2d2d; }
    .doc { position: relative; width: 1280px; height: 720px; background: #fff; box-shadow: 0 2px 6px rgba(0, 0, 0, .45); }
    .guide { position: absolute; background: rgba(97, 255, 255, .55); }
    .guide.v { width: 2px; top: -1000px; bottom: -1000px; margin-left: -1px; }
    .guide.h { height: 2px; left: -2000px; right: -2000px; margin-top: -1px; }
    .dialog {
      position: absolute; left: 902px; top: 447px; width: 260px; padding: 26px 16px 16px;
      display: flex; flex-direction: column; align-items: center;
      background: #e9e9e9; border-radius: 10px; color: #2b2b2b;
      box-shadow: 0 0 1px rgba(0, 0, 0, .6), 0 16px 36px rgba(0, 0, 0, .38), 0 0 16px rgba(0, 0, 0, .08);
    }
    .logo { display: flex; align-items: center; justify-content: center; width: 52px; height: 52px; border-radius: 10px; background: #001e36; color: #31a8ff; font: 700 30px/40px "Open Sans", sans-serif; padding-bottom: 2px; }
    .msg { margin: 26px 0 16px; padding: 0 8px; font: 700 13px/16px Inter, sans-serif; text-align: center; }
    .ok { width: 228px; height: 28px; padding-bottom: 1px; border-radius: 6px; color: #fff; font: 500 13px/16px Inter, sans-serif; background: linear-gradient(#2d91ff, #0a76ff); }

    .status { display: flex; align-items: center; height: 15px; background: var(--body); flex: none; }
    .zoomval { width: 60px; height: 15px; padding-left: 17px; background: #464646; }
    .docinfo { display: flex; align-items: center; justify-content: space-between; width: 184px; height: 15px; padding-left: 24px; background: var(--panel); white-space: nowrap; }
    .docinfo .ib { width: 16px; height: 14px; }
    .timeline { margin-top: 3px; }
    .frames { display: flex; height: 70px; padding-top: 2px; background: var(--body); }
    .frame { display: flex; flex-direction: column; width: 54px; padding: 3px 3px 0; background: #696969; }
    .thumb { display: flex; flex: none; flex-direction: column; justify-content: center; position: relative; width: 48px; height: 49px; border: 1px solid #fff; background: var(--panel); padding: 2px; }
    .thumb i { height: 24px; background: #fff; }
    .thumb b { position: absolute; left: 1px; top: 1px; width: 9px; height: 12px; background: #484848; text-align: center; font: 700 9px/12px var(--tab); color: #fff; }
    .delay { display: flex; flex: none; align-items: center; justify-content: flex-end; height: 16px; color: #eee; white-space: nowrap; }
    .delay .icon { margin: 0 -5px 0 -6px; }
    .tfoot { display: flex; height: 27px; margin-top: 1px; background: #4a4a4a; }
    .tg { display: flex; align-items: center; justify-content: space-around; border-right: 1px solid var(--line); background: var(--panel); }
    .t1 { width: 30px; } .t2 { width: 71px; } .t3 { width: 117px; color: var(--dim); } .t4 { width: 88px; color: var(--dim); }
    .t2 .drop { width: 70px; }
    .t2 .drop select { border: 0; background: none; padding-left: 10px; }
    .t2 .drop .icon { margin-right: -3px; color: #eee; }
    .lit { color: var(--fg); }
    .ghost { opacity: .35; }

    .dockgroup { display: flex; flex-direction: column; align-items: center; padding-bottom: 4px; border-bottom: 1px solid var(--line); }
    .dockgrip { display: flex; align-items: flex-end; height: 8px; padding-bottom: 1px; }
    .dockgroup .ib { width: 37px; height: 28px; }

    .colorpanel { display: flex; height: 418px; margin-bottom: 3px; padding: 7px 16px 0 8px; }
    .colorpanel .swatches { margin: 2px 0 0; width: 37px; grid-template-columns: 11px 10px 9px; grid-template-rows: 11px 10px 9px; align-content: start; }
    .field { position: relative; width: 148px; height: 394px; overflow: hidden; background: linear-gradient(transparent, #000), linear-gradient(90deg, #fff, #f00); }
    .field::before { content: ""; position: absolute; left: -6px; top: -6px; width: 12px; height: 12px; border: 1px solid #111; border-radius: 50%; background: #fff; }
    .pointer { display: flex; align-items: flex-end; width: 17px; height: 399px; padding-left: 6px; }
    .hue { appearance: none; width: 19px; height: 394px; background: linear-gradient(#f00, #f0f 16.600%, #00f 33.300%, #0ff 50%, #0f0 66.600%, #ff0 83.300%, #f00); }
    .hue::-webkit-slider-thumb { appearance: none; width: 19px; height: 3px; background: none; }
    .adjpanel { height: 419px; margin-bottom: 3px; padding: 4px 0 0 8px; }
    .adjpanel p { margin: 0; font: 500 10px/16px Inter, sans-serif; }
    .adjgrid { display: flex; flex-direction: column; padding-right: 45px; margin-top: -2px; }
    .adjrow { display: flex; justify-content: center; height: 27px; }
    .adjrow .ib { width: 24px; height: 27px; }

    .lrow { display: flex; align-items: center; height: 28px; border-bottom: 1px solid var(--line); padding-left: 4px; color: #969696; white-space: nowrap; flex: none; }
    .lrow .ib { width: 22px; height: 24px; }
    .filter { height: 32px; padding-top: 6px; }
    .filter .ib { width: 24px; }
    .kind { width: 88px; margin-right: 8px; }
    .kind select { padding-left: 21px; border-color: #4a4a4a; background: #4f4f4f; }
    .kind .search { display: flex; pointer-events: none; justify-self: start; padding-left: 5px; color: #b5b5b5; }
    .kind .search .icon { width: 14px; height: 14px; margin: 0; }
    .kind > .icon, .blend > .icon { opacity: .4; }
    .blend { width: 129px; }
    .blend select { border-color: #4a4a4a; background: #4f4f4f; }
    .toggle { width: 8px; height: 16px; border-radius: 4px; background: #3f3f3f; margin-left: 6px; display: flex; justify-content: center; }
    .toggle::before { content: ""; width: 8px; height: 8px; border-radius: 50%; background: #a8a8a8; flex: none; }
    .num { display: flex; align-items: center; gap: 3px; margin-left: auto; padding-right: 14px; color: #969696; }
    .field2 { display: flex; align-items: center; width: 51px; height: 18px; border: 1px solid #666; border-radius: 2px; color: #737373; }
    .field2 input { width: 36px; height: 16px; padding-left: 3px; border-right: 1px solid #666; }
    .field2 .ib { width: 13px; height: 16px; overflow: hidden; }
    .ltext { width: 28px; }
    .fx { font: italic 600 16px/16px "Liberation Serif", serif; width: 22px; text-align: center; }
    .propagate { margin-left: auto; padding-right: 16px; }
    .propagate input:checked { background: #8a8a8a; border-color: #8a8a8a; }
    .fxlink { display: flex; align-items: center; }
    .fxlink .fx { width: 18px; padding-bottom: 2px; }
    .fxlink .icon { margin-left: -14px; }
    .layer-item { display: flex; height: 29px; border-bottom: 1px solid var(--line); padding-right: 15px; flex: none; background: #4a4a4a; color: #fff; }
    .layer-item .vis { width: 30px; height: 28px; background: var(--panel); }
    .layer-main { display: flex; align-items: center; flex: 1; margin-left: 1px; padding: 0 12px 0 3px; background: #6b6b6b; }
    .lthumb { width: 32px; height: 19px; border: 1px solid #222; background: #fff; margin-right: 8px; }
    .layers-body { flex: 1; background: var(--body); }
    .lfoot { display: flex; align-items: center; justify-content: space-between; height: 25px; border-top: 1px solid var(--line); padding: 0 21px 0 37px; color: var(--dim); flex: none; }
    .lfoot .fx { width: 26px; }
  `;

  private tabs(names: [string, boolean, string?][]) {
    return html`<div class="tabs" role="tablist">
      ${names.map(([n, on, cls]) => html`<button role="tab" class="tab ${on ? "on" : ""} ${cls ?? ""}">${n}</button>`)}
      <div class="rest">${iconButton("menu", "Panel menu", "slim")}</div>
    </div>`;
  }

  private percent(label: string, id: string) {
    return html`<div class="num"><label for=${id}>${label}</label>
      <div class="field2"><input id=${id} value="100%" />${iconButton("chevron", label + " slider")}</div></div>`;
  }

  private options() {
    return html`<div class="options">
      <div class="grip-v"></div>
      ${iconButton("home", "Home", "home")}
      <div class="sep"></div>
      ${iconButton("move", "Move tool preset", "slim")}
      ${iconButton("chevron", "Tool presets", "slim")}
      <div class="sep"></div>
      <label class="check auto"><input type="checkbox" checked />Auto-Select:</label>
      <div class="drop layer"><select aria-label="Auto-select target"><option>Layer</option><option>Group</option></select>${icon("chevron")}</div>
      <div class="sep"></div>
      <label class="check transform"><input type="checkbox" />Show Transform Controls</label>
      <div class="sep"></div>
      <div class="align">
        ${iconButton("left", "Align left edges")}${iconButton("hcenter", "Align horizontal centers")}${iconButton("right", "Align right edges")}
        ${iconButton("distv", "Distribute vertically", "wide")}
      </div>
      <div class="sep"></div>
      <div class="align">
        ${iconButton("top", "Align top edges")}${iconButton("vcenter", "Align vertical centers")}${iconButton("bottom", "Align bottom edges")}
        ${iconButton("disth", "Distribute horizontally", "wide")}
      </div>
      <div class="sep"></div>
      ${iconButton("dots", "More options")}
      <div class="sep"></div>
      <span class="mode">3D Mode:</span>
      <div class="align">
        ${iconButton("orbit", "Orbit")}${iconButton("roll", "Roll")}${iconButton("pan3d", "Pan")}${iconButton("slide3d", "Slide")}${iconButton("camera3d", "Zoom camera")}
      </div>
      <div class="spacer"></div>
      <div class="right-tools">
        ${iconButton("user", "Account")}${iconButton("search", "Search", "lit")}${iconButton("workspace", "Workspace")}
        ${iconButton("chevron", "Workspace menu", "slim ghost")}${iconButton("share", "Share")}
      </div>
    </div>`;
  }

  private toolbar() {
    return html`<nav class="col" aria-label="Tools">
      <div class="head">${icon("expand")}</div>
      <div class="toolgrip"><div class="grip"></div></div>
      ${TOOLS.map(([id, label, more]) => html`<button type="button" aria-label=${label}
        class=${classMap({ tool: true, active: this.tool === id, more })}
        @click=${() => (this.tool = id)}>${icon(id)}</button>`)}
      <div class="pair">${iconButton("defaults", "Default colors")}${iconButton("swap", "Swap colors")}</div>
      <div class="swatches"><button class="fg" aria-label="Foreground color"></button><button class="bg" aria-label="Background color"></button></div>
      <button type="button" class="tool" aria-label="Quick mask">${icon("quickmask")}</button>
      <button type="button" class="tool more" aria-label="Screen mode">${icon("screen")}</button>
    </nav>`;
  }

  private canvas() {
    return html`<div class="rulers">
      <div class="corner"></div>
      <div class="hr"><div class="hm lead"></div>${H_MARKS.map((m) => html`<div class="hm">${m}</div>`)}</div>
      <div></div>
      <div class="vr"><div class="vm lead"><span>0</span></div>
        ${V_MARKS.map((m) => html`<div class="vm">${[...String(m)].map((d) => html`<span>${d}</span>`)}</div>`)}</div>
      <div class="stage">
        <div class="doc">
          ${[5, 10, 90, 95].map((p) => html`<div class="guide v" style="left:${p}%"></div><div class="guide h" style="top:${p}%"></div>`)}
        </div>
        <div class="dialog" role="alertdialog" aria-labelledby="msg">
          <div class="logo">Ps</div>
          <p class="msg" id="msg">Could not place “A002_C009_092221_001.mp4” because the video file could not be opened.</p>
          <button class="ok" type="button">OK</button>
        </div>
      </div>
      <div></div>
    </div>`;
  }

  private timeline() {
    return html`<section class="timeline">
      ${this.tabs([["Timeline", true]])}
      <div class="frames"><div class="frame">
        <div class="thumb"><i></i><b>1</b></div>
        <div class="delay">0 sec.${icon("chevron")}</div>
      </div></div>
      <div class="tfoot">
        <div class="tg t1">${iconButton("timelineMode", "Convert to video timeline")}</div>
        <div class="tg t2"><div class="drop"><select aria-label="Looping"><option>Forever</option><option>Once</option></select>${icon("caret")}</div></div>
        <div class="tg t3">${iconButton("first", "First frame")}${iconButton("prev", "Previous frame")}${iconButton("play", "Play")}${iconButton("next", "Next frame")}</div>
        <div class="tg t4">${iconButton("tween", "Tween")}${iconButton("plus", "Duplicate frame", "lit")}${iconButton("trash", "Delete frame")}</div>
      </div>
    </section>`;
  }

  private panels() {
    return html`<aside class="col">
      <div class="head end">${icon("expand")}</div>
      ${this.tabs([["Color", true], ["Swatches", false, "clip"], ["Gradients", false, "clip"], ["Patterns", false]])}
      <div class="colorpanel">
        <div class="swatches"><button class="fg" aria-label="Foreground color"></button><button class="bg" aria-label="Background color"></button></div>
        <div class="field"></div>
        <div class="pointer"><svg width="10" height="12" viewBox="0 0 10 12" aria-hidden="true"><path d="M1.500 2h3L9 6l-4.500 4h-3z" fill="#ddd" stroke="#222"/></svg></div>
        <input class="hue" type="range" min="0" max="360" value="0" aria-label="Hue" />
      </div>
      ${this.tabs([["Libraries", false], ["Adjustments", true]])}
      <div class="adjpanel">
        <p>Add an adjustment</p>
        <div class="adjgrid">${ADJUSTMENTS.map((r) => html`<div class="adjrow">${r.map(([n, l]) => iconButton(n, l))}</div>`)}</div>
      </div>
      ${this.tabs([["Layers", true], ["Channels", false], ["Paths", false]])}
      <div class="lrow filter">
        <div class="drop kind"><select aria-label="Filter type"><option>Kind</option></select><span class="search">${icon("search")}</span>${icon("chevron")}</div>
        ${iconButton("pixels", "Filter pixel layers")}${iconButton("adjust", "Filter adjustment layers")}${iconButton("typeSmall", "Filter type layers")}${iconButton("shape", "Filter shape layers")}${iconButton("smart", "Filter smart objects")}
        <button class="toggle" aria-label="Filtering on"></button>
      </div>
      <div class="lrow">
        <div class="drop blend"><select aria-label="Blend mode"><option>Normal</option></select>${icon("chevron")}</div>
        ${this.percent("Opacity:", "opacity")}
      </div>
      <div class="lrow"><span class="ltext">Unify:</span>
        ${iconButton("pinLink", "Unify position")}${iconButton("eyeLink", "Unify visibility")}
        <button class="fxlink" aria-label="Unify style"><span class="fx">fx</span><svg class="icon" viewBox="0 0 20 20" width="20" height="20">${smallLink}</svg></button>
        <label class="check propagate"><input type="checkbox" checked />Propagate Frame 1</label>
      </div>
      <div class="lrow"><span class="ltext">Lock:</span>
        ${iconButton("checker", "Lock transparency")}${iconButton("brush", "Lock pixels")}${iconButton("move", "Lock position")}${iconButton("artboardLock", "Lock nesting")}${iconButton("lock", "Lock all")}
        ${this.percent("Fill:", "fill")}
      </div>
      <div class="layer-item">
        ${iconButton("eye", "Toggle visibility", "vis")}
        <div class="layer-main"><div class="lthumb"></div><span>Background</span><div class="spacer"></div>${icon("lockOpen")}</div>
      </div>
      <div class="layers-body"></div>
      <div class="lfoot">
        ${iconButton("link", "Link layers")}<button class="fx" aria-label="Layer style">fx</button>${iconButton("mask", "Add mask", "lit")}${iconButton("adjust", "New adjustment layer", "lit")}${iconButton("folder", "New group", "lit")}${iconButton("plus", "New layer", "lit")}${iconButton("trash", "Delete layer")}
      </div>
    </aside>`;
  }

  render() {
    return html`<div class="window">
      <header class="titlebar">
        <div class="lights"><span class="light red"></span><span class="light yellow"></span><span class="light green"></span></div>
        <h1 class="title">Adobe Photoshop 2021</h1>
      </header>
      ${this.options()}
      <div class="work">
        ${this.toolbar()}
        <main class="col">
          <div class="tabs doctabs" role="tablist">
            <div class="tab on doctab">${iconButton("close", "Close document", "slim dim")}<span>Untitled-1 @ 100% (RGB/8#) *</span></div>
            <div class="rest"></div>
          </div>
          ${this.canvas()}
          <div class="status"><span class="zoomval">100%</span><div class="docinfo">1280 px x 720 px (72 ppi)${iconButton("chevronRight", "Document info")}</div></div>
          ${this.timeline()}
        </main>
        <div class="col">
          <div class="head end">${icon("collapse")}</div>
          ${DOCK.map((g) => html`<div class="dockgroup"><div class="dockgrip"><div class="grip"></div></div>${g.map(([n, l]) => iconButton(n, l))}</div>`)}
        </div>
        ${this.panels()}
      </div>
    </div>`;
  }
}
